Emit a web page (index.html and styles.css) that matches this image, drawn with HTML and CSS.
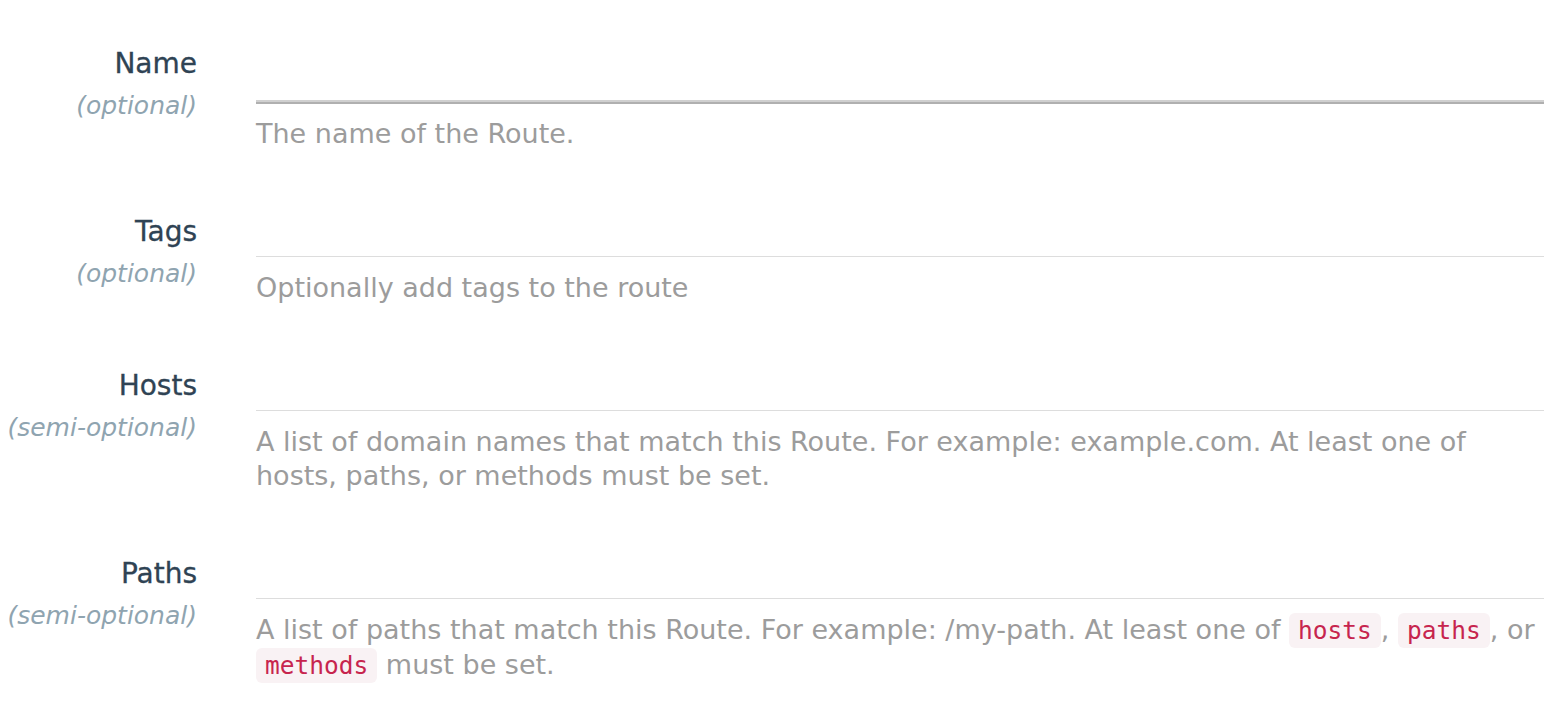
FILE: index.html
```html
<!DOCTYPE html>
<html>
<head>
<meta charset="utf-8">
<link rel="stylesheet" href="styles.css">
<title>Route form</title>
</head>
<body>
<form class="form">
  <div class="field">
    <div class="field-label">
      <label class="label-name">Name</label>
      <span class="label-hint">(optional)</span>
    </div>
    <div class="field-body">
      <div class="input input-focused"></div>
      <p class="help">The name of the Route.</p>
    </div>
  </div>
  <div class="field">
    <div class="field-label">
      <label class="label-name">Tags</label>
      <span class="label-hint">(optional)</span>
    </div>
    <div class="field-body">
      <div class="input"></div>
      <p class="help">Optionally add tags to the route</p>
    </div>
  </div>
  <div class="field">
    <div class="field-label">
      <label class="label-name">Hosts</label>
      <span class="label-hint">(semi-optional)</span>
    </div>
    <div class="field-body">
      <div class="input"></div>
      <p class="help">A list of domain names that match this Route. For example: example.com. At least one of hosts, paths, or methods must be set.</p>
    </div>
  </div>
  <div class="field">
    <div class="field-label">
      <label class="label-name">Paths</label>
      <span class="label-hint">(semi-optional)</span>
    </div>
    <div class="field-body">
      <div class="input"></div>
      <p class="help">A list of paths that match this Route. For example: /my-path. At least one of <code>hosts</code>, <code>paths</code>, or <code>methods</code> must be set.</p>
    </div>
  </div>
</form>
</body>
</html>
```

FILE: styles.css
```css
html, body {
  margin: 0;
  padding: 0;
  background: #ffffff;
}

body {
  font-family: "DejaVu Sans", "Liberation Sans", sans-serif;
}

.form {
  display: flex;
  flex-direction: column;
  gap: 64px;
  padding: 47px 4px 0 0;
}

.field {
  display: grid;
  grid-template-columns: 197px 1fr;
  column-gap: 59px;
  align-items: start;
}

.field-label {
  display: flex;
  flex-direction: column;
  align-items: flex-end;
  text-align: right;
}

.label-name {
  font-size: 28px;
  line-height: 34px;
  color: #2f4354;
  -webkit-text-stroke: 0.3px #2f4354;
  white-space: nowrap;
}

.label-hint {
  margin-top: 8px;
  font-size: 25px;
  line-height: 34px;
  font-style: italic;
  color: #8fa4b0;
  white-space: nowrap;
}

.field-body {
  display: flex;
  flex-direction: column;
}

.input {
  box-sizing: border-box;
  height: 42px;
  border-bottom: 1px solid #dddddd;
}

.input-focused {
  height: 55px;
  border-bottom: 2px solid #d0d0d0;
  box-shadow: 0 2px 0 #b0b0b0;
}

.input-focused + .help {
  margin-top: 15px;
}

.help {
  margin: 14px 0 0 0;
  font-size: 27px;
  line-height: 34px;
  color: #9c9c9c;
}

code {
  font-family: "DejaVu Sans Mono", "Liberation Mono", monospace;
  font-size: 24.5px;
  color: #c7254e;
  background: #f9f2f4;
  border-radius: 6px;
  padding: 3px 9px;
}
```
